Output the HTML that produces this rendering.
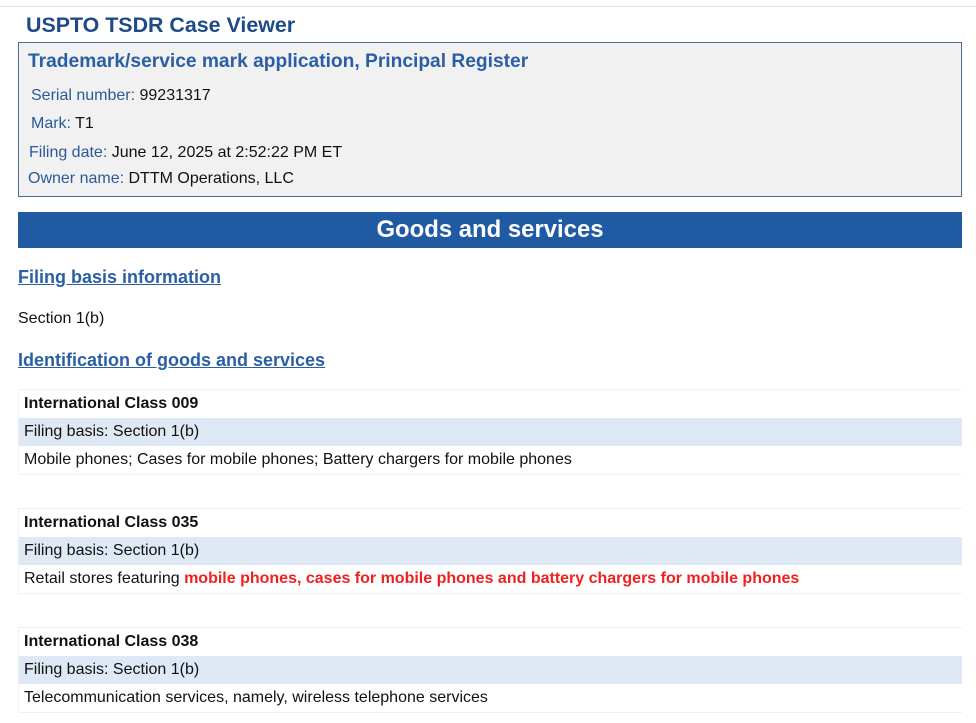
<!DOCTYPE html>
<html><head><style>
body{margin:0;background:#fff;font-family:"Liberation Sans",sans-serif;width:976px;height:723px;overflow:hidden;position:relative;color:#111}
.a{position:absolute;white-space:nowrap}
.lbl{color:#2a5a9a}
.cls{position:absolute;left:18px;width:943px;border:1px solid #eef0f2;border-right:none}
.cls div{height:28px;line-height:28px;padding-left:5px;font-size:16px;white-space:nowrap}
.cls .h{font-weight:bold}
.cls .f{background:#dfe8f5}
</style></head><body>
<div class="a" style="left:0;top:6px;width:976px;border-top:1px solid #e6e6e6"></div>
<div class="a" style="left:26px;top:13px;font-size:21.4px;font-weight:bold;color:#1e4b87">USPTO TSDR Case Viewer</div>
<div class="a" style="left:18px;top:42px;width:942px;height:153px;background:#f1f1f2;border:1px solid #4a6a96"></div>
<div class="a" style="left:28px;top:51px;font-size:19.2px;font-weight:bold;color:#2a5fa5">Trademark/service mark application, Principal Register</div>
<div class="a" style="left:31px;top:87px;font-size:16px"><span class="lbl">Serial number:</span> 99231317</div>
<div class="a" style="left:31px;top:115px;font-size:16px"><span class="lbl">Mark:</span> T1</div>
<div class="a" style="left:29px;top:144px;font-size:16px"><span class="lbl">Filing date:</span> June 12, 2025 at 2:52:22 PM ET</div>
<div class="a" style="left:28px;top:170px;font-size:16px"><span class="lbl">Owner name:</span> DTTM Operations, LLC</div>
<div class="a" style="left:18px;top:212px;width:944px;height:36px;background:#1f5aa3;color:#fff;font-size:23.9px;font-weight:bold;text-align:center;line-height:36px">Goods and services</div>
<div class="a" style="left:18px;top:267px;font-size:18px;font-weight:bold;color:#2a5fa5;text-decoration:underline">Filing basis information</div>
<div class="a" style="left:18px;top:310px;font-size:16px">Section 1(b)</div>
<div class="a" style="left:18px;top:350px;font-size:18px;font-weight:bold;color:#2a5fa5;text-decoration:underline">Identification of goods and services</div>
<div class="cls" style="top:389px"><div class="h">International Class 009</div><div class="f">Filing basis: Section 1(b)</div><div>Mobile phones; Cases for mobile phones; Battery chargers for mobile phones</div></div>
<div class="cls" style="top:508px"><div class="h">International Class 035</div><div class="f">Filing basis: Section 1(b)</div><div>Retail stores featuring <b style="color:#f0201f">mobile phones, cases for mobile phones and battery chargers for mobile phones</b></div></div>
<div class="cls" style="top:627px"><div class="h">International Class 038</div><div class="f">Filing basis: Section 1(b)</div><div>Telecommunication services, namely, wireless telephone services</div></div>
</body></html>
